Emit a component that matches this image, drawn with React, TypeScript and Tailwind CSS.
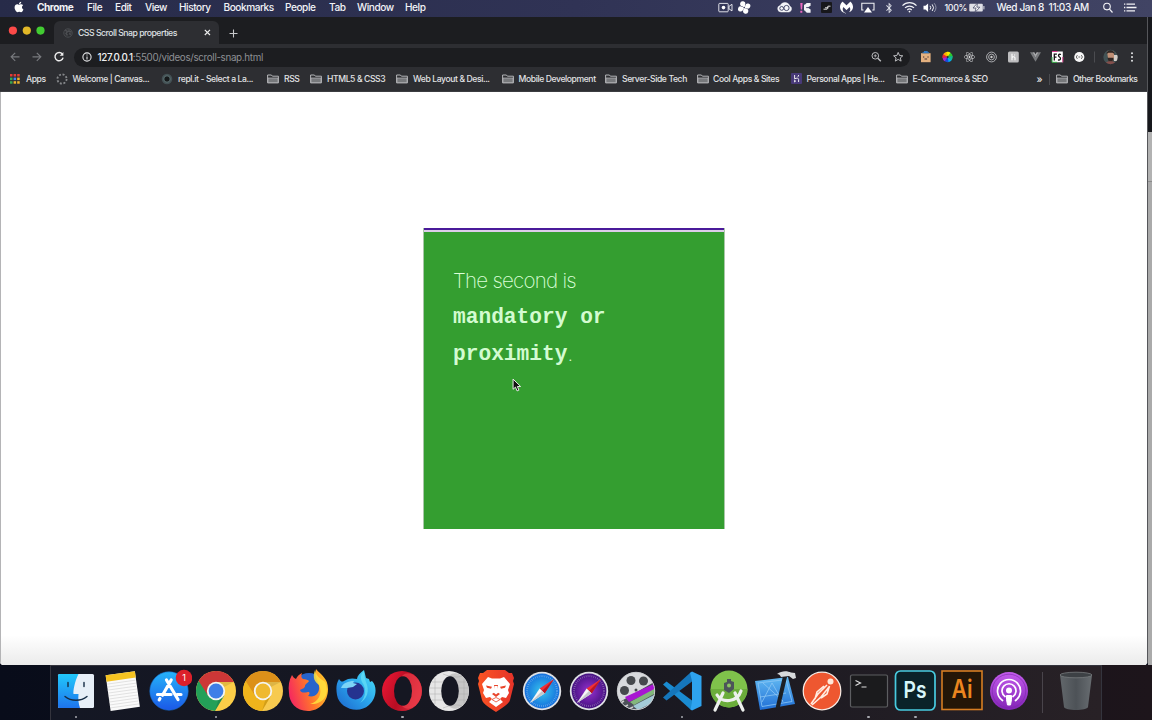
import React from "react";
import { FaApple, FaReact, FaBluetoothB } from "react-icons/fa";
import { SiMalwarebytes } from "react-icons/si";

type Item = { t: string; c: string };

const menus: Item[] = [
  { t: "Chrome", c: "w-[50px] font-bold" },
  { t: "File", c: "w-[28px]" },
  { t: "Edit", c: "w-[30px]" },
  { t: "View", c: "w-[34px]" },
  { t: "History", c: "w-[44.5px]" },
  { t: "Bookmarks", c: "w-[61.5px]" },
  { t: "People", c: "w-[44px]" },
  { t: "Tab", c: "w-[28px]" },
  { t: "Window", c: "w-[48px]" },
  { t: "Help", c: "w-[30px]" },
];

const Folder = () => (
  <svg className="h-[10px] w-[12px] shrink-0" viewBox="0 0 12 10" fill="none" stroke="#c3c4c6">
    <path d="M.6 8.9V1h3.8l1 1.2h6v6.7z" strokeWidth=".9" />
    <path d="M1 4h10v4.5H1z" fill="#77797c" stroke="#b5b6b9" strokeWidth=".7" />
  </svg>
);

const AppsGrid = () => (
  <svg className="h-[10px] w-[10px] shrink-0" viewBox="0 0 10 10">
    {["#e33b36", "#e33b36", "#e33b36", "#38a852", "#4285f4", "#f0b429", "#38a852", "#f0b429", "#f0b429"].map((f, i) => (
      <rect key={i} x={(i % 3) * 3.6} y={Math.floor(i / 3) * 3.6} width="2.5" height="2.5" fill={f} />
    ))}
  </svg>
);

const Heroku = () => (
  <svg className="h-[11px] w-[11px] shrink-0" viewBox="0 0 11 11">
    <rect width="11" height="11" rx="1" fill="#483a78" />
    <path d="M3.6 2v3.8c2.2-1 4-.8 4 .6V9M7.6 2c0 .8-.3 1.4-.8 1.9M3.6 7.2V9l1-.9z" fill="none" stroke="#eee" strokeWidth="1" />
  </svg>
);

const bookmarks: { icon: React.ReactNode; t: string; c: string; s: string }[] = [
  { icon: <AppsGrid />, t: "Apps", c: "w-[46px]", s: "gap-[6px]" },
  {
    icon: (
      <svg className="h-[12px] w-[12px] shrink-0" viewBox="0 0 12 12">
        <circle cx="6" cy="6" r="4.6" fill="none" stroke="#85878a" strokeWidth="1.8" strokeDasharray="2 1.61" />
      </svg>
    ),
    t: "Welcome | Canvas...", c: "w-[105px]", s: "gap-[4.5px]",
  },
  {
    icon: (
      <svg className="h-[12px] w-[12px] shrink-0" viewBox="0 0 12 12">
        <circle cx="6" cy="6" r="5.3" fill="#435054" />
        <circle cx="6" cy="6" r="3.2" fill="#16191b" stroke="#6a8184" strokeWidth=".8" />
      </svg>
    ),
    t: "repl.it - Select a La...", c: "w-[106px]", s: "gap-[5px]",
  },
  { icon: <Folder />, t: "RSS", c: "w-[43px]", s: "gap-[5px]" },
  { icon: <Folder />, t: "HTML5 & CSS3", c: "w-[86px]", s: "gap-[5px]" },
  { icon: <Folder />, t: "Web Layout & Desi...", c: "w-[105.5px]", s: "gap-[5px]" },
  { icon: <Folder />, t: "Mobile Development", c: "w-[103.5px]", s: "gap-[5px]" },
  { icon: <Folder />, t: "Server-Side Tech", c: "w-[91.5px]", s: "gap-[5px]" },
  { icon: <Folder />, t: "Cool Apps & Sites", c: "w-[94px]", s: "gap-[4.5px]" },
  { icon: <Heroku />, t: "Personal Apps | He...", c: "w-[105px]", s: "gap-[5px]" },
  { icon: <Folder />, t: "E-Commerce & SEO", c: "w-[141.5px]", s: "gap-[5px]" },
];

const MenuBar = () => (
  <header className="flex h-[17px] w-full shrink-0 items-start bg-linear-to-r from-[#272b49] via-[#303355] to-[#414464] text-[10.1px] leading-[15px] font-medium tracking-[-0.45px] whitespace-nowrap text-[#f2f3f7]">
    <div className="w-[37px] pt-[1px] pl-[13px]">
      <FaApple size={12} color="#fff" />
    </div>
    <nav className="flex flex-1">
      {menus.map((m) => (
        <span key={m.t} className={m.c}>{m.t}</span>
      ))}
    </nav>
    <svg className="h-[16px] w-[228px] shrink-0" viewBox="712 0 228 16" fill="none" stroke="#f0f1f5">
      <rect x="718.8" y="3.4" width="9.4" height="8.4" rx=".8" strokeWidth=".9" />
      <circle cx="723.5" cy="7.6" r="1.8" fill="#fff" stroke="none" />
      <path d="M729 6.3l3-2v6.6l-3-2z" strokeWidth=".9" />
      <g fill="#fff" stroke="none" transform="translate(744.2 7.5) rotate(12)">
        <circle cx="-2.2" cy="-3.2" r="2.6" />
        <circle cx="3.2" cy="-2.2" r="2.6" />
        <circle cx="2.2" cy="3.2" r="2.6" />
        <circle cx="-3.2" cy="2.2" r="2.6" />
        <path d="M-1.5-4L1.5 4M-4 1.5L4-1.5" stroke="#fff" strokeWidth="2" />
        <circle r=".8" fill="#303355" />
      </g>
      <path d="M781 12a3.3 3.3 0 0 1-.8-6.5 5.2 5.2 0 0 1 9.6.5 3.2 3.2 0 0 1-.8 6z" fill="#f4f5f8" strokeWidth=".5" />
      <circle cx="781.7" cy="8.4" r="1.9" stroke="#363a5c" strokeWidth=".9" />
      <circle cx="786.5" cy="8" r="2.6" stroke="#363a5c" strokeWidth=".9" />
      <path d="M800.3 3h2.3l-.5 6.6h-1.3zM800.3 10.7h2v2h-2z" fill="#eb67c1" stroke="none" />
      <path d="M804 4.8c2 0 1.4-1.9 3.2-1.9h3.4v2.8l-3 1.8 3 2v3.2h-3.4c-1.8 0-1.2-2.2-3.2-2.2z" fill="#f1f2f6" stroke="none" />
      <path d="M806.2 7.6h2" stroke="#444a70" />
      <rect x="821" y="2" width="11" height="11" rx="1" fill="#17171b" stroke="none" />
      <path d="M823.5 9.2h3.6l.8-3h2.6M825 7.8h3.6" stroke="#ddd" strokeWidth="1" />
      <SiMalwarebytes x={840} y={1} size={13} color="#fff" stroke="none" />
      <path d="M863.5 10h-1.7V3.3h12.2V10h-1.7" strokeWidth="1.1" />
      <path d="M868 7l4 5.6h-8z" fill="#fff" stroke="none" />
      <FaBluetoothB x={883.5} y={2.5} size={11} color="#dfe1e9" stroke="none" />
      <g strokeWidth="1.2">
        <path d="M902.5 5.6a9.8 9.8 0 0 1 14 0M905 7.9a6.4 6.4 0 0 1 9 0M907.3 10a3.2 3.2 0 0 1 4.4 0" />
      </g>
      <circle cx="909.5" cy="11.6" r=".9" fill="#fff" stroke="none" />
      <path d="M923.5 5.8h2l2.6-2.3v8.4l-2.6-2.3h-2z" fill="#fff" stroke="none" />
      <path d="M930 5.8a3 3 0 0 1 0 3.8M932.2 4.4a5.2 5.2 0 0 1 0 6.6" strokeWidth="1" />
      <path d="M934.2 3.2a7 7 0 0 1 0 8.8" stroke="#a8abbc" strokeWidth=".8" />
    </svg>
    <span className="w-[29px] shrink-0 pl-[4.5px] text-[8.9px] tracking-[-0.35px]">100%</span>
    <svg className="h-[16px] w-[27.5px] shrink-0" viewBox="969 0 27.5 16">
      <rect x="969.3" y="3.7" width="13.5" height="7.8" rx="1" fill="#dfe0e7" />
      <rect x="983.4" y="6" width="1" height="3.4" fill="#dfe0e7" />
      <path d="M977.5 3l-4.5 5h3l-1 4.4 4.8-5.2h-3z" fill="#fff" stroke="#484b69" strokeWidth=".8" />
    </svg>
    <span className="w-[96.5px] shrink-0 tracking-[-0.4px] whitespace-pre">Wed Jan 8  11:03 AM</span>
    <svg className="h-[16px] w-[59px] shrink-0" viewBox="1093 0 59 16" fill="none" stroke="#f2f2f6">
      <circle cx="1107" cy="6.6" r="3.3" strokeWidth="1.1" />
      <path d="M1109.5 9.2l3 3.3" strokeWidth="1.2" />
      <path d="M1126.5 4.2h8.5M1126.5 7.5h10M1126.5 10.8h8.5" strokeWidth="1.3" />
      <path d="M1124 4.2h1.3M1124 7.5h1.3M1124 10.8h1.3" strokeWidth="1.3" />
    </svg>
  </header>
);

const TabStrip = () => (
  <div className="flex h-[27px] shrink-0 bg-[#1c1d20]">
    <svg className="h-[27px] w-[50px] shrink-0" viewBox="0 17 50 27">
      <circle cx="12.9" cy="30.6" r="4.1" fill="#fc4a48" />
      <circle cx="26.8" cy="30.6" r="4.1" fill="#e2b827" />
      <circle cx="40.5" cy="30.6" r="4.1" fill="#42cc32" />
    </svg>
    <div className="mt-[4px] ml-[3.5px] flex h-[23px] w-[165px] items-center rounded-t-[6px] bg-[#2d2e32] pl-[9px]">
      <svg className="h-[10px] w-[10px] shrink-0" viewBox="0 0 10 10" fill="none" stroke="#4b4d51">
        <circle cx="5" cy="5" r="4.2" strokeWidth="1" />
        <path d="M2 2l2.5 1.5L3 5.5l1.5 2M6 1.5v2l2.5.5M6 5.5l2 1" strokeWidth="1.5" />
      </svg>
      <span className="mt-[2px] ml-[5.5px] w-[126px] text-[8.7px] font-medium tracking-[-0.5px] whitespace-nowrap text-[#dfe0e3]">CSS Scroll Snap properties</span>
      <svg className="h-[7px] w-[7px] shrink-0" viewBox="0 0 7 7" stroke="#eceded" strokeWidth="1.2">
        <path d="M.8.8l5.2 5.2M6 .8L.8 6" />
      </svg>
    </div>
    <svg className="mt-[11.5px] ml-[10px] h-[9px] w-[9px]" viewBox="0 0 9 9" stroke="#c7c8ca" strokeWidth="1.1">
      <path d="M4.5.5v8M.5 4.5h8" />
    </svg>
  </div>
);

const Toolbar = () => (
  <div className="flex h-[24px] shrink-0 items-center bg-[#2d2e32]">
    <svg className="h-[24px] w-[74px] shrink-0" viewBox="0 44 74 24" fill="none" strokeWidth="1.2">
      <path d="M19.5 56.8h-8.3M15.2 52.8l-4 4 4 4M32.5 56.8h8.3M36.8 52.8l4 4-4 4" stroke="#77797d" />
      <path d="M62.4 54.2a4.1 4.1 0 1 0 .7 3.4" stroke="#eee" strokeWidth="1.4" />
      <path d="M63.4 52v3.7h-3.7z" fill="#eee" />
    </svg>
    <div className="mt-[2px] flex h-[19px] w-[836px] shrink-0 items-center rounded-full bg-[#1c1d20] pr-[7px] pl-[8px]">
      <svg className="h-[10px] w-[10px] shrink-0" viewBox="0 0 10 10" fill="none" stroke="#e5e6e8">
        <circle cx="5" cy="5" r="4.1" strokeWidth="1.1" />
        <path d="M5 4.5v3M5 2.5v1.1" strokeWidth="1.1" />
      </svg>
      <span className="mt-[2px] ml-[5.5px] flex-1 text-[9.8px] tracking-[-0.32px] whitespace-nowrap text-[#8e9094]">
        <span className="font-medium text-[#f1f1f2]">127.0.0.1</span>:5500/videos/scroll-snap.html
      </span>
      <svg className="h-[14px] w-[36px] shrink-0" viewBox="867 50 36 14" fill="none" stroke="#bcbdc0">
        <circle cx="875.3" cy="55.8" r="3.3" strokeWidth="1" />
        <path d="M877.8 58.3l3 3" strokeWidth="1.4" />
        <path d="M873.8 55.8h3M875.3 54.3v3" strokeWidth=".8" />
        <path d="M898.2 52.4l1.3 3.1 3.3.3-2.5 2.1.8 3.2-2.9-1.7-2.9 1.7.8-3.2-2.5-2.1 3.3-.3z" strokeWidth="1" />
      </svg>
    </div>
    <svg className="h-[24px] w-[237px] shrink-0" viewBox="910 44 237 24">
      <rect x="921" y="53.2" width="9.6" height="9" fill="#e3b07f" />
      <path d="M922.5 53.2v-1h1.4v-1.1h3.8v1.1h1.4v1z" fill="#2f79c4" />
      <path d="M923 57h1.3M927.4 57h1.3M924.5 59h2.6" stroke="#433" strokeWidth="1" />
      <g>
        {["#00b0f0", "#194bd7", "#a827d0", "#ee2734", "#ffb200", "#f5ec00", "#2cc92f", "#11b992"].map((f, i) => (
          <path key={f} d="M947.6 57l-2.3-4.6a5.1 5.1 0 0 1 4.6 0z" fill={f} transform={`rotate(${i * 45 + 150} 947.6 57)`} />
        ))}
        <circle cx="947.6" cy="57" r="1" fill="#2d2e32" />
      </g>
      <FaReact x={964} y={51.5} size={11} color="#d5d6d8" />
      <g fill="none" stroke="#b9babd">
        <circle cx="991.5" cy="57" r="4.9" strokeWidth=".9" />
        <circle cx="991.5" cy="57" r="2.9" strokeWidth=".9" />
        <circle cx="991.5" cy="57" r="1.2" fill="#ccc" stroke="none" />
      </g>
      <rect x="1008" y="51.6" width="10.8" height="10.8" rx="1.5" fill="#bdbdbf" />
      <path d="M1012 53.8v6.4M1012 57.5c1-1 3-1 3 .4v2.3M1014.6 54.6v1" stroke="#fff" fill="none" strokeWidth="1.1" />
      <path d="M1030 52.3h2.4l3.1 5.3 3.1-5.3h2.4l-5.5 9.5z" fill="#77797c" />
      <path d="M1032.4 52.3h2l1.1 1.9 1.1-1.9h2l-3.1 5.3z" fill="#a6a7a9" />
      <rect x="1052" y="51.5" width="10.8" height="10.8" fill="#fff" />
      <path d="M1052 51.5h5.4M1062.8 57v5.3" stroke="#d63e8a" />
      <path d="M1052 57v5.3h5" stroke="#31ac42" fill="none" />
      <path d="M1054.3 60.6v-6.4h2.6M1054.3 57.2h2.2M1061 54.5c-2.5-.9-3.2 1-1.8 2.3 2.4 1.4 1.4 3.8-1.2 3" stroke="#151515" strokeWidth="1.3" fill="none" />
      <circle cx="1079.3" cy="57" r="5.1" fill="#f7f7f7" />
      <path d="M1077.4 55.1a2.5 2.5 0 0 0 0 3.8M1081.3 55.1a2.5 2.5 0 0 1 0 3.8M1078.4 57h1.8" stroke="#555" strokeWidth=".9" fill="none" />
      <path d="M1094.5 51.5v11" stroke="#4b4c50" />
      <clipPath id="avatar"><circle cx="1110.5" cy="57" r="7.2" /></clipPath>
      <g clipPath="url(#avatar)">
        <path d="M1103 49h15v16h-15z" fill="#435355" />
        <path d="M1114 55h4v6h-4z" fill="#d5cfc9" />
        <path d="M1107 51.5h7v6l-1.5 4h-4z" fill="#c08f75" />
        <path d="M1106.5 54c0-5 8-5 8 0l-2-1.2h-4zM1107.5 57.8h6l-1 4h-4z" fill="#302724" />
        <path d="M1104 65c1-5 12-5 13 0z" fill="#844e4b" />
      </g>
      <g fill="#e5e6e7">
        <circle cx="1132" cy="53.2" r="1" /><circle cx="1132" cy="57" r="1" /><circle cx="1132" cy="60.8" r="1" />
      </g>
    </svg>
  </div>
);

const BookmarkBar = () => (
  <div className="flex h-[24px] shrink-0 items-center border-b border-[#3c3d41] bg-[#2d2e32] pb-[1px] pl-[10px] text-[8.6px] font-medium tracking-[-0.4px] whitespace-nowrap text-[#e2e3e5]">
    {bookmarks.map((b) => (
      <div key={b.t} className={`flex shrink-0 items-center ${b.c} ${b.s}`}>
        {b.icon}
        <span>{b.t}</span>
      </div>
    ))}
    <span className="ml-[-0.5px] w-[12px] text-[10px]">»</span>
    <div className="flex h-[11px] items-center gap-[5px] border-l border-[#4b4c50] pl-[6.5px] tracking-[-0.48px]">
      <Folder />
      <span>Other Bookmarks</span>
    </div>
  </div>
);

const Safari = ({ id, a, b }: { id: string; a: string; b: string }) => (
  <>
    <radialGradient id={id}><stop offset="0" stopColor={a} /><stop offset="1" stopColor={b} /></radialGradient>
    <circle r="19.2" fill="#dfe1e5" />
    <circle r="17.4" fill={`url(#${id})`} />
    <circle r="15" fill="none" stroke="#fff" strokeOpacity=".4" strokeWidth="2" strokeDasharray=".6 1.37" />
    <path d="M12-12L2.6 2.4-2.4-2.4z" fill="#ef3037" />
    <path d="M12-12L2.6 2.4 0 0z" fill="#b91724" />
    <path d="M-12 12L-2.4-2.4 2.6 2.4z" fill="#f7f7f7" />
    <path d="M-12 12L0 0l2.6 2.4z" fill="#c5c8cc" />
  </>
);

const ChromeLogo = ({ r, g, y, c }: { r: string; g: string; y: string; c: string }) => (
  <>
    <circle r="20" fill={y} />
    <path d="M0 0L-17.3-10A20 20 0 0 0-1 20L8.3 4.5z" fill={g} />
    <path d="M-17.3-10A20 20 0 0 1 17.9-9H0L-8 4.5z" fill={r} />
    <path d="M8 4.5L-1 19.9 2 10z" fill="#000" opacity=".12" />
    <path d="M0-9h17.9L8-4z" fill="#000" opacity=".1" />
    <circle r="9.2" fill="#f4f4f2" />
    <circle r="7.4" fill={c} />
  </>
);

const dock: { n: string; dot?: boolean; art: React.ReactNode }[] = [
  {
    n: "finder", dot: true, art: (
      <>
        <linearGradient id="fi" x2="0" y2="1"><stop stopColor="#21c8fb" /><stop offset="1" stopColor="#1e74ed" /></linearGradient>
        <rect x="-18" y="-17" width="36" height="34" rx="1.5" fill="#e7eff8" />
        <path d="M-16.5-17H2.5C-1.5-9-3 0-2.5 3h5C2 8 2.5 13 4 17h-20.5a1.5 1.5 0 0 1-1.5-1.5v-31A1.5 1.5 0 0 1-16.5-17z" fill="url(#fi)" />
        <path d="M-8-8.5v4M8-8.5v4M-11 5.5C-5 10.5 5 10.5 11 5.5" fill="none" stroke="#152c45" strokeWidth="1.4" strokeLinecap="round" />
      </>
    ),
  },
  {
    n: "notes", art: (
      <g transform="rotate(-8)">
        <path d="M-15-18h29.5v36h-29.5z" fill="#fafafa" />
        <path d="M-15-18h29.5v6.5h-29.5z" fill="#f5c321" />
        <path d="M-15-9h29M-15-6h29M-15-3h29M-15 0h29M-15 3h29M-15 6h29M-15 9h29M-15 12h29M-15 15h29" stroke="#d3d3d3" strokeWidth=".6" />
      </g>
    ),
  },
  {
    n: "app-store", art: (
      <>
        <linearGradient id="as" x2="0" y2="1"><stop stopColor="#25b4fa" /><stop offset="1" stopColor="#1b58e7" /></linearGradient>
        <circle r="19.2" fill="url(#as)" stroke="#176dcd" strokeWidth=".6" />
        <path d="M2.2-11L-6.5 4.2M-9 7.5l-.8 1.3M-2.5-11L9 8.5M-11.5 3.5H2M8 3.5h4" stroke="#fff" strokeWidth="3.2" strokeLinecap="round" />
        <circle cx="15" cy="-13" r="8.3" fill="#dc202b" />
        <text x="15" y="-9.8" textAnchor="middle" fontSize="9" fill="#fff">1</text>
      </>
    ),
  },
  { n: "chrome", dot: true, art: <ChromeLogo r="#cd3737" g="#23a058" y="#fcce48" c="#3f7ee8" /> },
  { n: "canary", art: <ChromeLogo r="#dc9019" g="#efb41c" y="#f7ca4f" c="#efb930" /> },
  {
    n: "firefox", art: (
      <>
        <linearGradient id="ff" x1="0" y1=".6" x2="1" y2=".3"><stop stopColor="#f52760" /><stop offset=".5" stopColor="#ff762b" /><stop offset="1" stopColor="#ffc92a" /></linearGradient>
        <circle cy="-2" r="16" fill="#2764cc" />
        <path d="M-17-16c1 2 2 3 4 4 1-3 4-5 6-6-1 3-1 5 1 6 3 0 5 1 6 2-1 2-4 3-4 5s-3 3-5 4c1 3 4 3 8 2 2 0 2 2 0 4 7 2 12-3 11-10-1-6-5-9-3-17 5 6 12 9 12 20 0 13-9 22-20 22-12 0-19-9-19-18-1-7 0-13 3-18z" fill="url(#ff)" />
        <path d="M6-21c-3 8 0 12 4 15 4 9-1 17-9 19C12 14 22 6 16-9 12-12 7-15 6-21z" fill="#ffe13d" opacity=".85" />
      </>
    ),
  },
  {
    n: "firefox-dev", art: (
      <>
        <linearGradient id="fd" x1="1" y1="0" x2="0" y2="1"><stop stopColor="#4ce2f5" /><stop offset=".5" stopColor="#2aa4ec" /><stop offset="1" stopColor="#1c64cc" /></linearGradient>
        <path d="M-17-12c2 3 3 3 5 2 4-3 9-3 13-2 0-3 3-6 7-9l2 8 3 1 1 3 2-1C22-4 20 8 13 14 2 24-17 17-19 4c-1-6-1-11 2-16z" fill="url(#fd)" />
        <circle cx="-.5" cy="0" r="8.5" fill="#25338f" />
        <path d="M6-9C4-14 5-17 8-20c0 5 1 8 2 11 4 9 1 17-6 21 6-6 7-14 2-21z" fill="#62dcf5" opacity=".8" />
        <path d="M-15-3c2-5 7-7 13-7l-1 2 4 1-4 3-6 1z" fill="#7cd4f7" />
      </>
    ),
  },
  {
    n: "opera", dot: true, art: (
      <>
        <linearGradient id="op" x2="1" y2=".4"><stop stopColor="#f01836" /><stop offset=".6" stopColor="#b80d23" /><stop offset="1" stopColor="#d92a3b" /></linearGradient>
        <circle r="20" fill="url(#op)" />
        <path d="M0-15c4-4 9-3 13 0 9 7 9 23 0 30-4 3-9 4-13 0z" fill="#f0424e" opacity=".6" />
        <ellipse cx="1" rx="9" ry="14.8" fill="#151722" />
      </>
    ),
  },
  {
    n: "opera-beta", art: (
      <>
        <circle r="20" fill="#e6e6e6" />
        <path d="M0-15c4-4 9-3 13 0 9 7 9 23 0 30-4 3-9 4-13 0z" fill="#c6c6c6" />
        <path d="M-17-9h34M-19-3h38M-19 3h38M-17 9h34M-14-13v26M15-12v24M-6-17c8 3 14 4 19 2M-6 17c8-3 14-4 19-2" fill="none" stroke="#a9a9a9" strokeWidth=".5" />
        <ellipse cx="1" rx="8.8" ry="14.8" fill="#151722" />
      </>
    ),
  },
  {
    n: "brave", art: (
      <>
        <linearGradient id="br"><stop stopColor="#fa5424" /><stop offset="1" stopColor="#e63329" /></linearGradient>
        <path d="M-9-21H9l4 3h3l2 5-1 3 1 3-4 16C13 13 6 17 0 21-6 17-13 13-14 9l-4-16 1-3-1-3 2-5h3z" fill="url(#br)" />
        <path d="M-8-14l4 1.5h8L8-14l6 7-2 6 1 3-3 5-4-1-2 2 3 3-7 5-7-5 3-3-2-2-4 1-3-5 1-3-2-6z" fill="#fff" />
        <path d="M-10-5.5l6 1.2-1 2-4-1zM10-5.5l-6 1.2 1 2 4-1zM-2-6l1 7-3 2 4 3 4-3-3-2 1-7" fill="#e9442a" />
        <path d="M-1.5-5h3l1 6.5L0 3.5l-2.5-2z" fill="#fff" />
        <path d="M-4 8.5l4-2 4 2-4 2.5z" fill="#fff" stroke="#e9442a" strokeWidth=".8" />
      </>
    ),
  },
  { n: "safari", art: <Safari id="sa" a="#38c5ec" b="#146fdd" /> },
  { n: "safari-preview", art: <Safari id="sp" a="#9731d0" b="#441180" /> },
  {
    n: "reel", art: (
      <>
        <clipPath id="reel"><circle r="19" /></clipPath>
        <g clipPath="url(#reel)">
          <circle r="19" fill="#d8dadd" />
          <g fill="#46494d"><circle cx="-5" cy="-10.5" r="4.5" /><circle cx="7.5" cy="-10" r="4.5" /><circle cx="-11.5" cy="-.5" r="4.5" /><circle cx="0" cy="-1" r="1.5" /></g>
          <path d="M-20 13L20-10V20h-40z" fill="#4c5159" />
          <path d="M-11 6L20-8v6L-7 11z" fill="#a816d2" />
          <path d="M-6 11L20-3v5L-2 14z" fill="#83b77c" />
          <path d="M-3 15L20 3v7L2 19z" fill="#a4cbd8" />
          <path d="M-17 13l5-3M-14 17l6-3M-9 19l6-3" stroke="#ccc" strokeWidth="1.5" />
        </g>
        <circle r="18.7" fill="none" stroke="#c7c9cc" />
      </>
    ),
  },
  {
    n: "vscode", dot: true, art: (
      <>
        <path d="M-19-6.5l3.5-3L10 9.5v9.5l-1.5-.5z" fill="#1a8bd1" />
        <path d="M-19 6.5l3.5 3L10-9.5V-19l-1.5.5z" fill="#1576bb" />
        <path d="M10-19.5l9.5 4.5v30L10 19.5 8.5 18.5 10 11v-21L8-18z" fill="#2ea3ee" />
      </>
    ),
  },
  {
    n: "android-studio", art: (
      <>
        <circle cy="-2" r="18.5" fill="#7fc24b" />
        <path d="M-18.5-2h37A18.5 18.5 0 0 1-18.5-2z" fill="#6bad3b" />
        <path d="M-6 2L-14 19M6 2l8 17M-12 4C-7 12 8 12 12 0" fill="none" stroke="#edf0ed" strokeWidth="3.2" strokeLinecap="round" />
        <path d="M-2-12h4v2l3 1v7L0 2l-5-3v-7l3-1z" fill="#4c555a" />
        <circle cy="-5.5" r="2" fill="#8cc660" />
      </>
    ),
  },
  {
    n: "xcode", art: (
      <>
        <linearGradient id="xc" x2="0" y2="1"><stop stopColor="#62baf3" /><stop offset="1" stopColor="#206ed5" /></linearGradient>
        <path d="M-20-10L13-14l7 27-35 6z" fill="url(#xc)" />
        <path d="M-13 11L-3-8M-3-8l11 19M-15 6l26-4M-12-8l20 18M-17-8l28-3.5 6 22-30 5z" stroke="#8cc6f5" strokeWidth=".8" fill="none" />
        <path d="M8-15l4 1L5 16c-1 3-5 2-4-1z" fill="#1c2026" />
        <path d="M2-17c5-4 11-3 14-1.5l4 .5 1 5-3 1-4-3-8 1c-1-2-2-3-4-3z" fill="#d7dadc" />
      </>
    ),
  },
  {
    n: "postman", art: (
      <>
        <circle r="18.8" fill="#ee5730" stroke="#f9ece5" strokeWidth="1.2" />
        <circle cx="8.5" cy="-9.5" r="3" fill="#ffe8d8" />
        <path d="M5-6L-4 3l-7 10M7-4L-1 6l-9 8M2-5L-5 1-7 8M7.5-5L5 3l-6 4" stroke="#ffece1" strokeWidth="1.6" fill="none" />
      </>
    ),
  },
  {
    n: "terminal", dot: true, art: (
      <>
        <rect x="-18.5" y="-16" width="37" height="32" rx="1.5" fill="#1b1b1d" stroke="#5d5e61" strokeWidth="1.2" />
        <path d="M-13.5-10.5l5 2.5-5 2.5M-7.5-4h5" fill="none" stroke="#dedede" strokeWidth="1.2" />
      </>
    ),
  },
  {
    n: "photoshop", dot: true, art: (
      <>
        <rect x="-19.5" y="-20" width="39.5" height="39" rx="5" fill="#0a2229" stroke="#48cbe0" strokeWidth="1.7" />
        <text y="6.5" textAnchor="middle" fontSize="23" fontWeight="600" fill="#d7f7fb" textLength="23" lengthAdjust="spacingAndGlyphs">Ps</text>
      </>
    ),
  },
  {
    n: "illustrator", art: (
      <>
        <rect x="-20" y="-20" width="40" height="38.5" fill="#241607" stroke="#d67d22" strokeWidth="1.6" />
        <text y="6.5" textAnchor="middle" fontSize="25" fontWeight="600" fill="#ec861f" textLength="21" lengthAdjust="spacingAndGlyphs">Ai</text>
      </>
    ),
  },
  {
    n: "podcasts", art: (
      <>
        <linearGradient id="po" x2="0" y2="1"><stop stopColor="#c45ced" /><stop offset="1" stopColor="#8324b6" /></linearGradient>
        <circle r="19" fill="url(#po)" />
        <circle r="16.8" fill="none" stroke="#7c26ab" strokeWidth=".6" />
        <path d="M-6.5 9.5a11.5 11.5 0 1 1 13 0M-4 5.5a7 7 0 1 1 8 0" fill="none" stroke="#fff" strokeWidth="1.7" strokeLinecap="round" />
        <circle cy="-.5" r="3" fill="#fff" />
        <path d="M-2.5 4.5h5v4L1.5 14h-3l-1-5.5z" fill="#fff" stroke="#fff" strokeLinejoin="round" />
      </>
    ),
  },
];

const DockIcon = ({ dot, children }: { dot?: boolean; children: React.ReactNode }) => (
  <div className="flex w-[46.63px] shrink-0 flex-col items-center pt-[2px]">
    <svg className="h-[46px] w-[46px]" viewBox="-23 -23 46 46">{children}</svg>
    {dot && <span className="mt-[1.5px] h-[2.5px] w-[2.5px] rounded-full bg-[#a9aab0]" />}
  </div>
);

export default function App() {
  return (
    <div className="relative flex h-[720px] w-[1152px] flex-col overflow-hidden bg-[#0e0f1d] font-['Inter','Liberation_Sans',sans-serif]">
      <MenuBar />
      <div className="flex h-[648px] shrink-0">
        <main className="flex w-[1147.5px] shrink-0 flex-col overflow-hidden rounded-b-[4px] border-r border-r-[#55565a] bg-white">
          <TabStrip />
          <Toolbar />
          <BookmarkBar />
          <section className="flex flex-1 flex-col justify-between border-l border-[#b4b4b6] bg-white pt-[136px]">
            <div className="ml-[422px] w-[302px] border-x border-[#a9c7a8]">
              <div className="h-[2px] bg-[#4a1a9a]" />
              <div className="h-[1.5px] bg-[#dccdea]" />
              <p className="h-[297.5px] bg-[#349e30] pt-[31px] pl-[29px] font-['Inter','Liberation_Sans',sans-serif] text-[20.5px] leading-[36.7px] font-extralight whitespace-nowrap text-[#dcffd9]">
                <span className="block tracking-[-0.75px]">The second is</span>
                <strong className="align-[1px] font-['Liberation_Mono',monospace] text-[21.2px] leading-none font-bold text-[#d3fbd0]">mandatory or<br />proximity</strong>.
              </p>
            </div>
            <div className="h-[30px] w-full bg-linear-to-b from-white to-[#ebebeb]" />
          </section>
        </main>
        <aside className="flex flex-1 flex-col">
          <div className="h-[115px] bg-[#17181c]" />
          <div className="h-[50px] border-b border-[#8b8b8b] bg-[#b2b2b2]" />
          <div className="flex-1 bg-[#aaa]" />
        </aside>
      </div>
      <footer className="flex h-[55px] shrink-0 bg-linear-to-r from-[#080c1a] to-[#1d151b] pl-[50px]">
        <div className="flex w-[1052px] border-x border-t border-[#34343d] bg-linear-to-r from-[#141724] via-[#171720] to-[#282126] pl-[1.7px]">
          {dock.map((d) => (
            <DockIcon key={d.n} dot={d.dot}>{d.art}</DockIcon>
          ))}
          <div className="mt-[6px] ml-[10px] h-[41px] w-px bg-[#49444b]" />
          <svg className="mt-[2px] ml-[10px] h-[46px] w-[46px]" viewBox="-23 -23 46 46">
            <linearGradient id="tr"><stop stopColor="#62676b" /><stop offset=".5" stopColor="#4d5257" /><stop offset="1" stopColor="#686d71" /></linearGradient>
            <path d="M-16-16l4 32c1 4 23 4 24 0l4-32z" fill="url(#tr)" />
            <ellipse cy="-16" rx="16" ry="2.8" fill="#3d4145" stroke="#777b7e" strokeWidth=".8" />
          </svg>
        </div>
      </footer>
      <svg className="absolute top-[378px] left-[512px] h-[14px] w-[9.7px]" viewBox="0 0 9 13">
        <path d="M1 1v9.5l2.2-2 1.5 3.5 1.7-.7L5 7.9h3z" fill="#111" stroke="#eee" strokeWidth=".9" />
      </svg>
    </div>
  );
}
